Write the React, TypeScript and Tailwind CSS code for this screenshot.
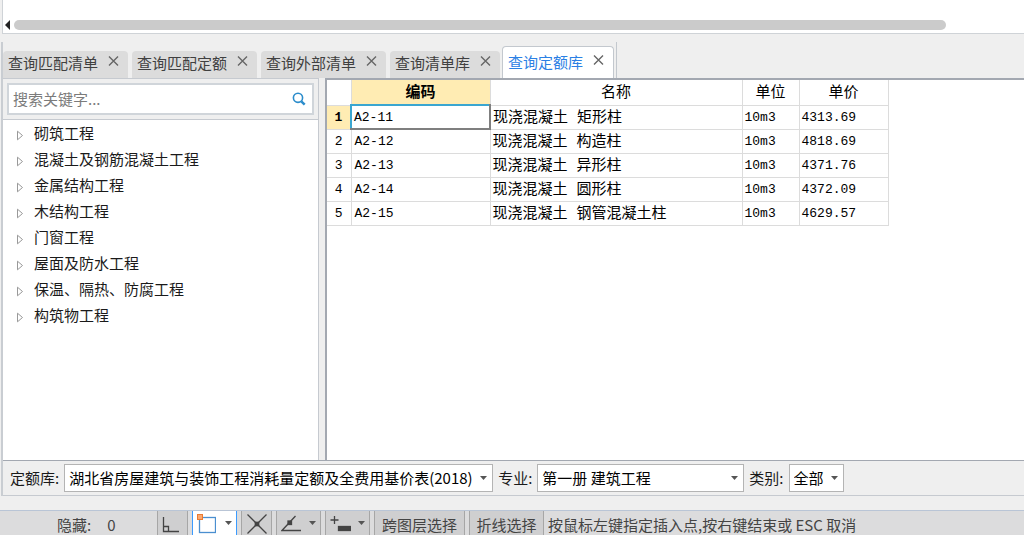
import { useState } from 'react';

const tabs = ['查询匹配清单', '查询匹配定额', '查询外部清单', '查询清单库', '查询定额库'];

const chapters = [
  '砌筑工程',
  '混凝土及钢筋混凝土工程',
  '金属结构工程',
  '木结构工程',
  '门窗工程',
  '屋面及防水工程',
  '保温、隔热、防腐工程',
  '构筑物工程',
];

const rows = [
  { code: 'A2-11', name: '现浇混凝土 矩形柱', unit: '10m3', price: '4313.69' },
  { code: 'A2-12', name: '现浇混凝土 构造柱', unit: '10m3', price: '4818.69' },
  { code: 'A2-13', name: '现浇混凝土 异形柱', unit: '10m3', price: '4371.76' },
  { code: 'A2-14', name: '现浇混凝土 圆形柱', unit: '10m3', price: '4372.09' },
  { code: 'A2-15', name: '现浇混凝土 钢管混凝土柱', unit: '10m3', price: '4629.57' },
];

function Caret() {
  return (
    <svg width="7" height="4" viewBox="0 0 7 4" fill="#555">
      <path d="M0 0h7L3.5 4z" />
    </svg>
  );
}

function TabItem({ label, active, onSelect }: { label: string; active: boolean; onSelect: () => void }) {
  return (
    <div
      className={
        active
          ? '-ml-0.5 flex h-8 items-start gap-2.5 rounded-t border border-b-0 border-[#c3c8ce] bg-white pt-[5px] pr-[9px] pl-[5px] text-[#2b80e4]'
          : 'flex h-[27px] items-start gap-2.5 rounded-t bg-[#dcdcdc] pt-0.5 pr-[9px] pl-[5px] text-[#404040]'
      }
    >
      <button type="button" role="tab" aria-selected={active} onClick={onSelect} className="leading-5">
        {label}
      </button>
      <button type="button" aria-label={`关闭 ${label}`} className="flex h-4 items-center">
        <svg width="11" height="10" viewBox="0 0 11 10" stroke="#666" strokeWidth="1.4" fill="none">
          <path d="M1 .5l9 9M10 .5l-9 9" />
        </svg>
      </button>
    </div>
  );
}

function Picker({ id, label, value, width }: { id: string; label: string; value: string; width: string }) {
  return (
    <div className="flex items-center gap-[5px]">
      <label htmlFor={id} className="whitespace-nowrap">
        {label}
      </label>
      <div className={`relative ${width}`}>
        <select
          id={id}
          className="h-7 w-full appearance-none border border-[#b4b4b4] bg-white pl-1 text-black outline-none"
        >
          <option>{value}</option>
        </select>
        <span className="pointer-events-none absolute inset-y-0 right-1.5 flex items-center">
          <Caret />
        </span>
      </div>
    </div>
  );
}

function ToolButton({
  label,
  className,
  children,
}: {
  label: string;
  className: string;
  children: React.ReactNode;
}) {
  return (
    <button
      type="button"
      aria-label={label}
      className={`flex h-full items-center border-x text-[#444] ${className}`}
    >
      {children}
    </button>
  );
}

export default function App() {
  const [activeTab, setActiveTab] = useState(4);
  const [selected, setSelected] = useState(0);

  return (
    <div className="flex min-h-screen flex-col bg-[#efefef] font-['Noto_Sans_CJK_SC',sans-serif] text-[15px] leading-5 text-[#1a1a1a]">
      {/* bottom edge of the upper grid, with its scrollbar */}
      <div className="ml-0.5 flex h-[34px] items-end gap-1 border-b border-l border-[#cfd3d7] bg-white pb-[3px] pl-0.5">
        <svg width="5" height="10" viewBox="0 0 5 10" fill="#222">
          <path d="M5 0v10L0 5z" />
        </svg>
        <div className="h-2.5 w-[91.5%] rounded-full bg-[#cbcbcb]" />
      </div>

      <div className="mt-2 ml-px flex flex-1 flex-col border-l-2 border-[#c9cdd2]">
        <div className="flex h-9 items-stretch">
          <div role="tablist" className="flex items-end gap-1 border-r border-[#c3c8ce] pr-0.5">
            {tabs.map((tab, i) => (
              <TabItem key={tab} label={tab} active={i === activeTab} onSelect={() => setActiveTab(i)} />
            ))}
          </div>
        </div>

        <div className="flex flex-1">
          <aside className="flex w-[316px] shrink-0 flex-col border-t border-r border-[#c6cad0]">
            <div className="px-1 py-1">
              <div className="flex h-8 items-center border-2 border-[#d0d5da] bg-white pr-1.5 pl-1">
                <input
                  type="text"
                  aria-label="搜索关键字"
                  placeholder="搜索关键字..."
                  className="min-w-0 flex-1 bg-transparent outline-none placeholder:text-[#7b7b7b]"
                />
                <button type="button" aria-label="搜索">
                  <svg width="14" height="14" viewBox="0 0 14 14" fill="none" stroke="#2b8ccb">
                    <circle cx="6" cy="5.8" r="4.6" strokeWidth="1.6" />
                    <path d="M9.3 9.3l3.4 3.4" strokeWidth="2.4" />
                  </svg>
                </button>
              </div>
            </div>
            <ul className="flex-1 border-t border-[#c6cad0] bg-white pl-[13px]">
              {chapters.map((chapter) => (
                <li key={chapter} className="flex h-[26px] items-center gap-2.5">
                  <svg width="8" height="11" viewBox="0 0 8 11" fill="none" stroke="#999" className="mt-1">
                    <path d="M1.5 1.2v8.6L6.5 5.5z" />
                  </svg>
                  {chapter}
                </li>
              ))}
            </ul>
          </aside>

          <main className="ml-[6px] flex-1 border-t-2 border-l-2 border-[#a3a8b1] bg-white text-black">
            <table className="w-[561px] table-fixed border-collapse font-['Liberation_Mono','Noto_Sans_CJK_SC',monospace]">
              <colgroup>
                <col className="w-[24px]" />
                <col className="w-[139px]" />
                <col className="w-[252px]" />
                <col className="w-[57px]" />
                <col className="w-[89px]" />
              </colgroup>
              <thead>
                <tr className="h-[25px]">
                  <th className="border-r border-b border-[#dcdcdc] p-0" />
                  <th className="border-r border-b border-[#dcdcdc] bg-[#ffecb3] p-0 pt-1 font-bold">编码</th>
                  <th className="border-r border-b border-[#dcdcdc] p-0 pt-1 font-normal">名称</th>
                  <th className="border-r border-b border-[#dcdcdc] p-0 pt-1 font-normal">单位</th>
                  <th className="border-r border-b border-[#dcdcdc] p-0 pt-1 font-normal">单价</th>
                </tr>
              </thead>
              <tbody>
                {rows.map((row, i) => (
                  <tr key={row.code} className="h-6" onClick={() => setSelected(i)}>
                    <th
                      className={
                        i === selected
                          ? 'border-r border-b border-[#dcdcdc] bg-[#ffecb3] p-0 pt-0.5 text-[13px] font-bold'
                          : 'border-r border-b border-[#dcdcdc] p-0 pt-0.5 text-[13px] font-normal'
                      }
                    >
                      {i + 1}
                    </th>
                    <td
                      className={
                        i === selected
                          ? 'border-2 border-t-[#3aa6d0] border-r-[#7f7f7f] border-b-[#7f7f7f] border-l-[#3aa6d0] p-0 pt-0.5 pl-0.5 text-[13px]'
                          : 'border-r border-b border-[#dcdcdc] p-0 pt-0.5 pl-[3px] text-[13px]'
                      }
                    >
                      {row.code}
                    </td>
                    <td className="border-r border-b border-[#dcdcdc] p-0 pt-[3px] pl-0.5">{row.name}</td>
                    <td className="border-r border-b border-[#dcdcdc] p-0 pt-0.5 pl-0.5 text-[13px]">{row.unit}</td>
                    <td className="border-r border-b border-[#dcdcdc] p-0 pt-0.5 pl-0.5 text-[13px]">{row.price}</td>
                  </tr>
                ))}
              </tbody>
            </table>
          </main>
        </div>

        <div className="flex h-9 items-center gap-[5px] border-t border-b border-t-[#a3a8b1] border-b-[#c6cad0] pl-[7px]">
          <Picker
            id="library"
            label="定额库:"
            value="湖北省房屋建筑与装饰工程消耗量定额及全费用基价表(2018)"
            width="w-[429px]"
          />
          <Picker id="major" label="专业:" value="第一册 建筑工程" width="w-[207px]" />
          <Picker id="kind" label="类别:" value="全部" width="w-[55px]" />
        </div>
      </div>

      <footer className="mt-3.5 flex h-[25px] border-t border-[#b9c5d6] bg-[#dcdcdd] text-[#444]">
        <div className="flex w-[157px] items-center gap-4 pt-1 pl-[57px]">
          <span>隐藏:</span>
          <span>0</span>
        </div>
        <div className="flex gap-1">
          <ToolButton label="正交" className="w-[31px] border-[#a6a6a6] bg-[#cfcfd0] pl-1">
            <svg width="18" height="18" viewBox="0 0 18 18" fill="none" stroke="#444" strokeWidth="1.3" className="mt-1">
              <path d="M1.5 1v14.5H17M1.5 10.5h5v5" />
            </svg>
          </ToolButton>
          <ToolButton label="对象捕捉" className="w-[45px] justify-between border-[#3b9bff] bg-white pr-1 pl-1">
            <svg width="19" height="20" viewBox="0 0 19 20" fill="none" className="mt-0.5">
              <rect x="2.5" y="3.5" width="16" height="15" stroke="#4a8fd0" strokeWidth="1.3" />
              <rect x=".5" y=".5" width="5" height="5" fill="#f9a870" stroke="#ec7a30" />
            </svg>
            <Caret />
          </ToolButton>
          <ToolButton label="交点" className="w-[31px] justify-center border-[#a6a6a6] bg-[#cfcfd0]">
            <svg width="20" height="20" viewBox="0 0 20 20" fill="none" stroke="#444" strokeWidth="1.3" className="mt-0.5">
              <path d="M.5 .5l19 19M19.5 .5l-19 19" />
              <rect x="8.3" y="8.3" width="3.4" height="3.4" fill="#444" />
            </svg>
          </ToolButton>
          <ToolButton label="角度" className="w-[45px] justify-between border-[#a6a6a6] bg-[#cfcfd0] pr-1 pl-1">
            <svg width="20" height="18" viewBox="0 0 20 18" fill="none" stroke="#444" strokeWidth="1.3" className="mt-0.5">
              <path d="M14.5 1L1 15.5h19" />
              <rect x="7" y="6" width="3.5" height="3.5" fill="#444" />
            </svg>
            <Caret />
          </ToolButton>
          <ToolButton label="动态输入" className="w-[45px] justify-between border-[#a6a6a6] bg-[#cfcfd0] pr-1 pl-1">
            <svg width="21" height="18" viewBox="0 0 21 18" fill="none" stroke="#444" strokeWidth="1.3" className="mt-0.5">
              <path d="M4.5 1v8M.5 5h8" />
              <rect x="8.5" y="11.5" width="12" height="4" fill="#444" />
            </svg>
            <Caret />
          </ToolButton>
          <ToolButton label="跨图层选择" className="w-[91px] justify-center border-[#a6a6a6] bg-[#cfcfd0] pt-1">
            跨图层选择
          </ToolButton>
          <ToolButton label="折线选择" className="w-[75px] justify-center border-[#a6a6a6] bg-[#cfcfd0] pt-1">
            折线选择
          </ToolButton>
        </div>
        <p className="flex items-center pt-1 pl-1 whitespace-nowrap">按鼠标左键指定插入点,按右键结束或 ESC 取消</p>
      </footer>
    </div>
  );
}
